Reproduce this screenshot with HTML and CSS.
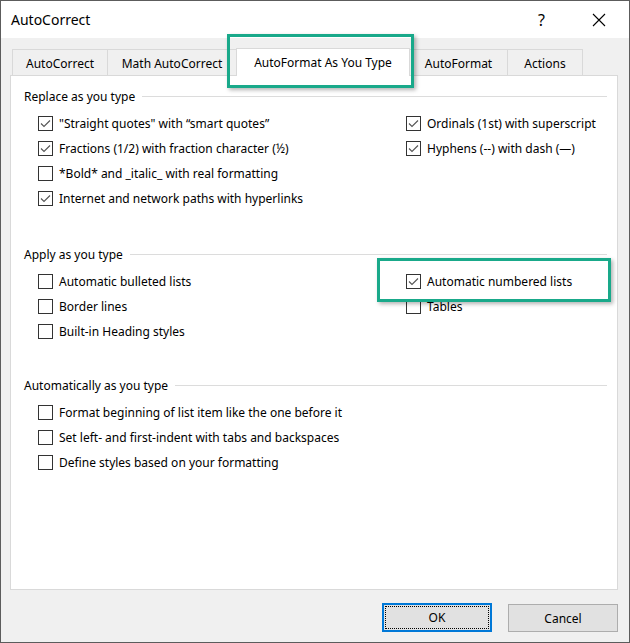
FILE: index.html
```html
<!DOCTYPE html>
<html>
<head>
<meta charset="utf-8">
<link rel="stylesheet" href="styles.css">
</head>
<body>
<div class="window">
  <div class="titlebar">
    <span class="title">AutoCorrect</span>
    <span class="help">?</span>
    <span class="close"><svg width="14" height="14" viewBox="0 0 14 14"><path d="M1 1 L13 13 M13 1 L1 13" stroke="#000" stroke-width="1.1" fill="none"/></svg></span>
  </div>
  <div class="content">
    <div class="tabs">
      <div class="tab tab-1">AutoCorrect</div>
      <div class="tab tab-2">Math AutoCorrect</div>
      <div class="tab tab-active">AutoFormat As You Type</div>
      <div class="tab tab-4">AutoFormat</div>
      <div class="tab tab-5">Actions</div>
    </div>
    <div class="panel">
      <section class="group group-first">
        <div class="group-head"><span>Replace as you type</span><span class="rule"></span></div>
        <div class="cols">
          <div class="col col-left">
            <label class="opt"><span class="cb"><svg viewBox="0 0 15 15"><path d="M3 7.5 L6 10.5 L12 4.5" class="tick"/></svg></span>"Straight quotes" with “smart quotes”</label>
            <label class="opt"><span class="cb"><svg viewBox="0 0 15 15"><path d="M3 7.5 L6 10.5 L12 4.5" class="tick"/></svg></span>Fractions (1/2) with fraction character (½)</label>
            <label class="opt"><span class="cb"></span>*Bold* and _italic_ with real formatting</label>
            <label class="opt"><span class="cb"><svg viewBox="0 0 15 15"><path d="M3 7.5 L6 10.5 L12 4.5" class="tick"/></svg></span>Internet and network paths with hyperlinks</label>
          </div>
          <div class="col">
            <label class="opt"><span class="cb"><svg viewBox="0 0 15 15"><path d="M3 7.5 L6 10.5 L12 4.5" class="tick"/></svg></span>Ordinals (1st) with superscript</label>
            <label class="opt"><span class="cb"><svg viewBox="0 0 15 15"><path d="M3 7.5 L6 10.5 L12 4.5" class="tick"/></svg></span>Hyphens (--) with dash (—)</label>
          </div>
        </div>
      </section>
      <section class="group">
        <div class="group-head"><span>Apply as you type</span><span class="rule"></span></div>
        <div class="cols">
          <div class="col col-left">
            <label class="opt"><span class="cb"></span>Automatic bulleted lists</label>
            <label class="opt"><span class="cb"></span>Border lines</label>
            <label class="opt"><span class="cb"></span>Built-in Heading styles</label>
          </div>
          <div class="col">
            <label class="opt"><span class="cb"><svg viewBox="0 0 15 15"><path d="M3 7.5 L6 10.5 L12 4.5" class="tick"/></svg></span>Automatic numbered lists</label>
            <label class="opt"><span class="cb"></span>Tables</label>
          </div>
        </div>
      </section>
      <section class="group group-last">
        <div class="group-head"><span>Automatically as you type</span><span class="rule"></span></div>
        <div class="cols">
          <div class="col col-left">
            <label class="opt"><span class="cb"></span>Format beginning of list item like the one before it</label>
            <label class="opt"><span class="cb"></span>Set left- and first-indent with tabs and backspaces</label>
            <label class="opt"><span class="cb"></span>Define styles based on your formatting</label>
          </div>
        </div>
      </section>
    </div>
    <div class="buttons">
      <button class="btn btn-default"><span class="focus">OK</span></button>
      <button class="btn">Cancel</button>
    </div>
  </div>
  <div class="hl hl-tab"></div>
  <div class="hl hl-opt"></div>
</div>
</body>
</html>
```
FILE: styles.css
```css
* { box-sizing: border-box; }
html, body { margin: 0; padding: 0; background: #fff; }
body {
  font-family: "Noto Sans", "Open Sans", "DejaVu Sans", sans-serif;
  font-size: 12px;
  color: #000;
}
.window {
  position: relative;
  width: 630px;
  height: 643px;
  border: 1px solid #5c5c5c;
  background: #f0f0f0;
  display: flex;
  flex-direction: column;
}
.titlebar {
  height: 37px;
  background: #fff;
  display: flex;
  align-items: center;
  padding-left: 10px;
  flex: none;
}
.title {
  font-size: 14px;
  flex: 1;
}
.help {
  font-size: 16px;
  width: 14px;
  margin-right: 40px;
}
.close {
  width: 14px;
  height: 14px;
  margin-right: 23px;
  display: flex;
}
.content {
  flex: 1;
  padding: 11px 11px 0 9px;
  display: flex;
  flex-direction: column;
}
.tabs {
  display: flex;
  align-items: flex-end;
  height: 26px;
  margin-left: 2px;
  position: relative;
  z-index: 1;
}
.tab {
  flex: none;
  height: 26px;
  display: flex;
  align-items: center;
  justify-content: center;
  border-top: 1px solid #d9d9d9;
  border-left: 1px solid #d9d9d9;
  background: #f0f0f0;
  white-space: nowrap;
  padding-top: 1px;
}
.tab-1 { width: 95px; }
.tab-2 { width: 129px; }
.tab-active {
  width: 174px;
  height: 28px;
  margin-bottom: -1px;
  background: #fff;
  border-right: 1px solid #d9d9d9;
  padding-bottom: 2px;
}
.tab-4 { width: 97px; border-left: none; }
.tab-5 { width: 76px; border-right: 1px solid #d9d9d9; }
.panel {
  width: 608px;
  height: 515px;
  flex: none;
  background: #fff;
  border: 1px solid #d9d9d9;
  padding: 12px 10px 0 13px;
}
.group + .group { margin-top: 35px; }
.group-last { margin-top: 33px !important; }
.group-head {
  display: flex;
  align-items: center;
  height: 16px;
  margin-bottom: 7px;
  white-space: nowrap;
}
.rule {
  flex: 1;
  height: 1px;
  background: #dcdcdc;
  margin-left: 7px;
}
.cols {
  display: flex;
  padding-left: 14px;
}
.col { display: flex; flex-direction: column; }
.col-left { width: 368px; flex: none; }
.opt {
  height: 25px;
  display: flex;
  align-items: center;
  white-space: nowrap;
}
.cb {
  width: 15px;
  height: 15px;
  border: 1px solid #333;
  background: #fff;
  margin-right: 6px;
  flex: none;
  position: relative;
}
.cb svg {
  position: absolute;
  left: -1px;
  top: -1px;
  width: 15px;
  height: 15px;
}
.tick {
  fill: none;
  stroke: #555;
  stroke-width: 1.1;
}
.buttons {
  display: flex;
  justify-content: flex-end;
  gap: 16px;
  margin-top: 13px;
}
.btn {
  width: 110px;
  height: 28px;
  background: #e1e1e1;
  border: 1px solid #adadad;
  font-family: inherit;
  font-size: 12px;
  color: #000;
  padding: 0;
  margin: 1px 0 0;
}
.btn-default {
  border: 2px solid #0078d7;
  height: 29px;
  margin-top: 0;
  padding: 1px;
}
.focus {
  display: flex;
  align-items: center;
  justify-content: center;
  width: 100%;
  height: 100%;
  border: 1px dotted #000;
}
.hl {
  position: absolute;
  border: 3px solid #19a98a;
  box-shadow: 2px 2px 4px rgba(0,0,0,0.3);
  z-index: 2;
  pointer-events: none;
}
.hl-tab { left: 226px; top: 33px; width: 187px; height: 54px; }
.hl-opt { left: 376px; top: 257px; width: 234px; height: 44px; }
```
